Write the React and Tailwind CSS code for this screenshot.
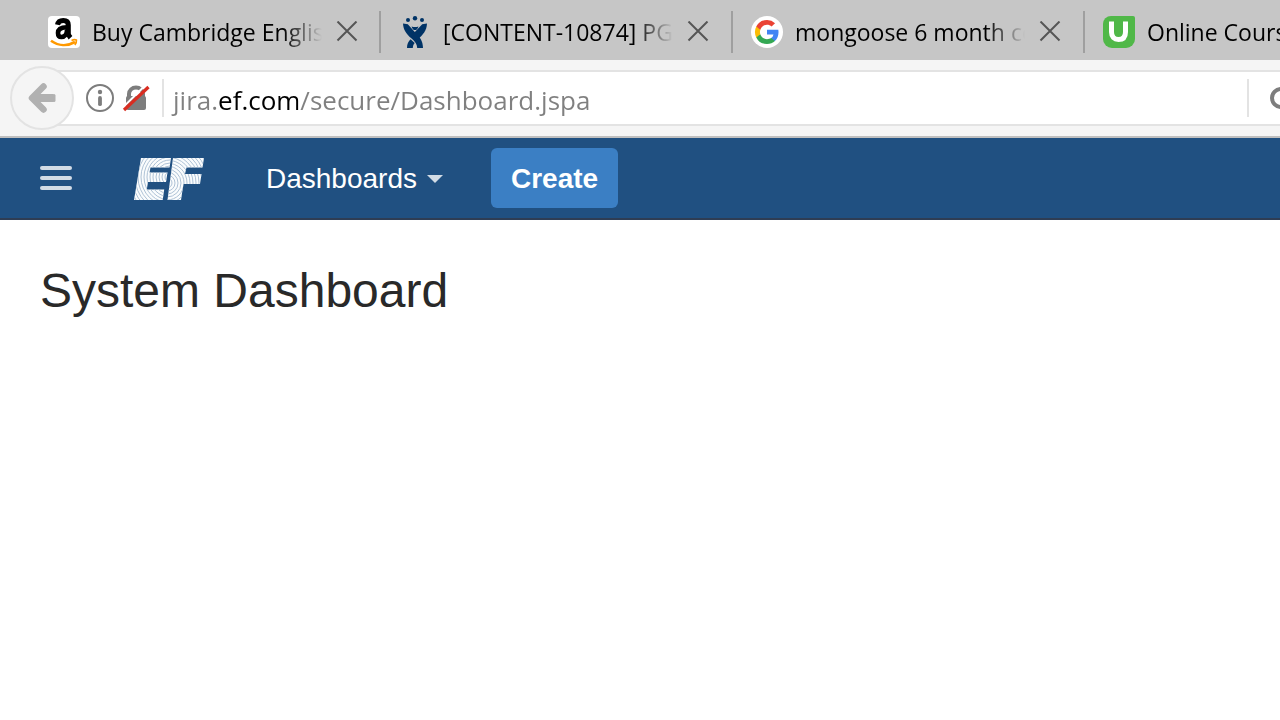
import React from "react";

function AmazonIcon() {
  return (
    <svg viewBox="0 0 32 32" className="size-8 shrink-0" aria-hidden="true">
      <rect width="32" height="32" rx="4" fill="#fff" />
      <path d="M9.500 8.800C10 6 12.200 4.400 15.300 4.400c3.300 0 5 1.600 5 4.600v8.500c0 1.800 1 3 2.200 4.300" fill="none" stroke="#000" strokeWidth="5" />
      <path d="M19 11.200c-5.500 0-9 1.600-9 5.800 0 2.500 1.300 4 3.400 4 3.400 0 5.600-2.600 5.600-7.200" fill="none" stroke="#000" strokeWidth="4.600" />
      <path d="M3 24.800c7.500 5.300 16.500 5.500 24 1.200" fill="none" stroke="#f90" strokeWidth="2.600" />
      <path d="M23.500 24.500c1.900-.9 3.800-.9 4.900-.5.200 1.600-.3 3.400-1.600 4.900" fill="none" stroke="#f90" strokeWidth="1.700" />
    </svg>
  );
}

function JiraIcon() {
  return (
    <svg viewBox="0 0 32 32" className="size-8 shrink-0" fill="#003366" aria-hidden="true">
      <circle cx="9" cy="4" r="2" />
      <circle cx="16" cy="2.200" r="2.200" />
      <circle cx="23" cy="4" r="2" />
      <path d="M12.600 10.400c2.200.8 4.600.8 6.800 0-.6 2-1.700 3.700-3.400 3.700s-2.800-1.700-3.400-3.700z" />
      <path d="M4 7.500l4.800.8L16 16.300c4.500 4.200 8 8.500 8 15.700h-5.800c-.2-4-2-6.200-5.600-9.400C7.500 18 4.300 14 4 7.500z" />
      <path d="M28 7.500l-4.800.8L13.500 18.500l5 5.200C24.300 18.500 27.700 14.200 28 7.500z" />
      <path d="M11.600 23.300C9.300 25.500 8 28.300 8 32h5.800c.1-2.200.8-3.800 1.900-5z" />
    </svg>
  );
}

function GoogleIcon() {
  return (
    <svg viewBox="0 0 32 32" className="size-8 shrink-0" aria-hidden="true">
      <circle cx="16" cy="16" r="16" fill="#fff" />
      <g transform="translate(4 4)">
        <path fill="#4285f4" d="M23.520 12.270c0-.85-.08-1.670-.22-2.450H12v4.640h6.460a5.520 5.520 0 0 1-2.400 3.620v3.010h3.880c2.270-2.090 3.580-5.170 3.580-8.820z" />
        <path fill="#34a853" d="M12 24c3.240 0 5.960-1.070 7.940-2.910l-3.880-3.010c-1.070.72-2.450 1.150-4.060 1.150-3.130 0-5.780-2.110-6.730-4.960H1.270v3.110A12 12 0 0 0 12 24z" />
        <path fill="#fbbc05" d="M5.270 14.270a7.200 7.200 0 0 1 0-4.540V6.620H1.270a12 12 0 0 0 0 10.760z" />
        <path fill="#ea4335" d="M12 4.770c1.760 0 3.350.61 4.600 1.800l3.440-3.440A11.500 11.500 0 0 0 12 0 12 12 0 0 0 1.270 6.620l4 3.110C6.220 6.880 8.870 4.770 12 4.770z" />
      </g>
    </svg>
  );
}

function UdemyIcon() {
  return (
    <svg viewBox="0 0 32 32" className="size-8 shrink-0" aria-hidden="true">
      <path fill="#50b848" d="M8 0h22a2 2 0 0 1 2 2v21a9 9 0 0 1-9 9H9a9 9 0 0 1-9-9V8a8 8 0 0 1 8-8z" />
      <path fill="none" stroke="#fff" strokeWidth="5" d="M8.500 5.500v10.500c0 5 2.700 7.500 7 7.500 4.500 0 7-2.500 7-7.500V5.500" />
    </svg>
  );
}

const tabs = [
  { title: "Buy Cambridge Englis", Icon: AmazonIcon },
  { title: "[CONTENT-10874] PG", Icon: JiraIcon },
  { title: "mongoose 6 month co", Icon: GoogleIcon },
  { title: "Online Courses", Icon: UdemyIcon },
];

function Tab({ title, Icon, first }) {
  return (
    <div
      className={
        "relative flex h-[60px] shrink-0 items-center pt-1 pl-5 " +
        (first
          ? "w-[351px]"
          : "w-[352px] before:absolute before:top-[11px] before:left-0 before:h-[42px] before:w-0.5 before:bg-[#9f9f9f]")
      }
    >
      <button type="button" className="flex min-w-0 items-center gap-3">
        <Icon />
        <span className="w-[230px] overflow-hidden text-left text-[23px] whitespace-nowrap text-black [mask-image:linear-gradient(to_right,#000_83%,transparent)]">
          {title}
        </span>
      </button>
      <button type="button" aria-label={"Close " + title} className="ml-3.5 shrink-0">
        <svg viewBox="0 0 22 22" className="size-[22px]" fill="none" stroke="#555" strokeWidth="2" aria-hidden="true">
          <path d="M1.500 .5l19 19M20.500 .5l-19 19" />
        </svg>
      </button>
    </div>
  );
}

function EfLogo() {
  const radii = [2, 5, 8, 11, 14, 17, 20, 23, 26, 29, 32, 35, 38, 41, 44];
  return (
    <svg viewBox="0 -1 72 44" className="h-11 w-[72px]" aria-hidden="true">
      <defs>
        <clipPath id="ef-left">
          <path d="M8 1h30l-1.500 9.500H17.500l-1 5h18L33 25H15l-1.200 7.500h17.400L29.700 43H1z" />
        </clipPath>
        <clipPath id="ef-right">
          <path d="M40 1h31l-1.500 9.500H53.500L52 17h16.500L67 27H50.500L48 43H34.500z" />
        </clipPath>
      </defs>
      <g clipPath="url(#ef-left)">
        <rect width="72" height="44" fill="#fafcfd" />
        {radii.map((r) => (
          <circle key={r} cx="37" cy="20" r={r} fill="none" stroke="#adc1d5" />
        ))}
      </g>
      <g clipPath="url(#ef-right)">
        <rect width="72" height="44" fill="#fafcfd" />
        {radii.map((r) => (
          <circle key={r} cx="34" cy="26" r={r} fill="none" stroke="#adc1d5" />
        ))}
      </g>
    </svg>
  );
}

function AddressBar() {
  return (
    <div className="relative h-[78px] border-b-2 border-[#bfbfbf] bg-[#f5f5f5] pt-2.5 pl-[42px]">
      <button
        type="button"
        aria-label="Back"
        className="absolute top-1.5 left-2.5 flex size-16 items-center justify-center rounded-full border-2 border-[#e3e3e3] bg-[#f5f5f5]"
      >
        <svg viewBox="0 0 28 32" className="h-8 w-7" fill="none" stroke="#b1b1b1" aria-hidden="true">
          <path d="M15.500 4.500L4 16l11.500 11.500" strokeWidth="6.500" strokeLinejoin="round" strokeLinecap="round" />
          <path d="M5 16h20.500" strokeWidth="8" />
          <path d="M26 13.500v5" strokeWidth="3" strokeLinecap="round" />
        </svg>
      </button>
      <div className="flex h-14 items-center overflow-hidden border-y-2 border-[#e3e3e3] bg-white pl-11">
        <button type="button" aria-label="Site information" className="shrink-0">
          <svg viewBox="0 0 28 28" className="size-7" aria-hidden="true">
            <circle cx="14" cy="14" r="13" fill="none" stroke="#7d7d7d" strokeWidth="2" />
            <circle cx="14" cy="8" r="2.200" fill="#7d7d7d" />
            <path d="M14 14v6.200" stroke="#7d7d7d" strokeWidth="3.800" strokeLinecap="round" />
          </svg>
        </button>
        <button type="button" aria-label="Insecure connection" className="ml-2 shrink-0">
          <svg viewBox="0 0 28 28" className="size-7" aria-hidden="true">
            <path d="M7 14V10a7 6.500 0 0 1 14 0V14" fill="none" stroke="#7d7d7d" strokeWidth="4" />
            <rect x="4" y="12" width="20" height="14" rx="2" fill="#7d7d7d" />
            <path d="M0 24.500L24.500 0" stroke="#fff" strokeWidth="2" />
            <path d="M2 26L26.500 3" stroke="#d92d21" strokeWidth="3.200" />
          </svg>
        </button>
        <input
          type="text"
          aria-label="Address"
          defaultValue="jira.ef.com/secure/Dashboard.jspa"
          className="ml-3 h-[38px] min-w-0 flex-1 border-l-2 border-[#e3e3e3] bg-[linear-gradient(to_right,#808080_53px,#000_53px,#000_134px,#808080_134px)] bg-clip-text pt-1 pl-[9px] text-[26px] text-transparent outline-none"
        />
        <button type="button" aria-label="Search" className="-mr-4 h-[38px] shrink-0 border-l-2 border-[#e3e3e3] pl-[21px]">
          <svg viewBox="0 0 26 26" className="size-[26px]" fill="none" stroke="#7d7d7d" strokeWidth="4" aria-hidden="true">
            <circle cx="11" cy="13" r="9" />
            <path d="M17 19l6 6" />
          </svg>
        </button>
      </div>
    </div>
  );
}

export default function App() {
  return (
    <div className="min-h-screen overflow-hidden bg-white font-['Liberation_Sans',Arial,sans-serif]">
      <div className="font-['Open_Sans','Noto_Sans',sans-serif]">
        <div className="flex overflow-hidden bg-[#c6c6c6] pl-7">
          {tabs.map((tab, i) => (
            <Tab key={tab.title} {...tab} first={i === 0} />
          ))}
        </div>
        <AddressBar />
      </div>
      <header className="flex h-[82px] items-center border-b-2 border-[#2e3d54] bg-[#205081] pl-10">
        <button type="button" aria-label="Menu" className="flex w-8 flex-col gap-1.5">
          <span className="h-1 rounded-sm bg-[#d2dce6]" />
          <span className="h-1 rounded-sm bg-[#d2dce6]" />
          <span className="h-1 rounded-sm bg-[#d2dce6]" />
        </button>
        <a href="#home" aria-label="EF home" className="ml-[61px]">
          <EfLogo />
        </a>
        <button type="button" className="ml-[61px] flex items-center gap-2.5 pt-0.5 text-[28px] text-white">
          Dashboards
          <svg viewBox="0 0 16 8" className="h-2 w-4" fill="#d2dce6" aria-hidden="true">
            <path d="M0 0h16L8 8z" />
          </svg>
        </button>
        <button type="button" className="ml-12 h-[60px] rounded-md bg-[#3b7fc4] px-5 pt-0.5 text-[28px] font-bold text-white">
          Create
        </button>
      </header>
      <main className="px-10 py-10">
        <h1 className="text-5xl leading-[62px] text-[#292929]">System Dashboard</h1>
      </main>
    </div>
  );
}
